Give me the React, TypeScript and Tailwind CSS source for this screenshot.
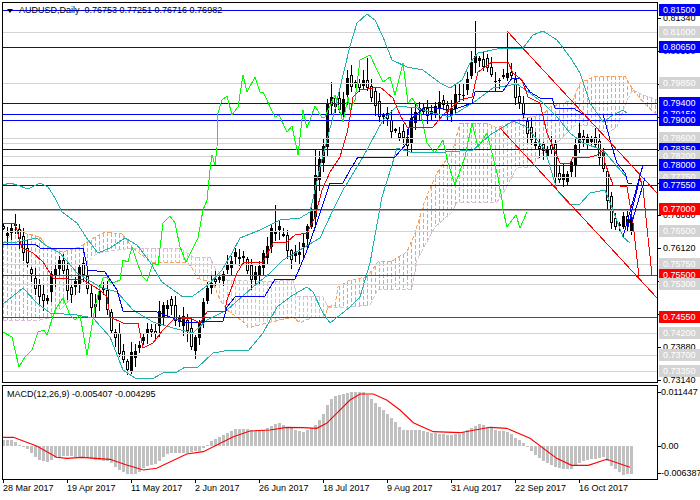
type Pt = [number, number];

const poly = (pts: Pt[]) => pts.map((p) => p.join(",")).join(" ");

const at = (pts: Pt[], x: number) => {
  for (let i = 1; i < pts.length; i++) {
    if (x <= pts[i][0]) {
      const [x0, y0] = pts[i - 1];
      const [x1, y1] = pts[i];
      return x1 === x0 ? y1 : y0 + ((y1 - y0) * (x - x0)) / (x1 - x0);
    }
  }
  return pts[pts.length - 1][1];
};

// price objects: y is the line position, colour gives the tag
const LEVELS: { y: number; price: string; color: string }[] = [
  { y: 10, price: "0.81500", color: "#0000ff" },
  { y: 32, price: "0.81000", color: "#d3d3d3" },
  { y: 47, price: "0.80650", color: "#0000ff" },
  { y: 83, price: "0.79850", color: "#d3d3d3" },
  { y: 103, price: "0.79400", color: "#0000ff" },
  { y: 114, price: "0.79150", color: "#0000ff" },
  { y: 120, price: "0.79000", color: "#0000ff" },
  { y: 138, price: "0.78600", color: "#d3d3d3" },
  { y: 149, price: "0.78350", color: "#0000ff" },
  { y: 156, price: "0.78200", color: "#d3d3d3" },
  { y: 165, price: "0.78000", color: "#0000ff" },
  { y: 177, price: "0.77750", color: "#d3d3d3" },
  { y: 185, price: "0.77550", color: "#0000ff" },
  { y: 209, price: "0.77000", color: "#ff0000" },
  { y: 231, price: "0.76500", color: "#d3d3d3" },
  { y: 264, price: "0.75750", color: "#d3d3d3" },
  { y: 275, price: "0.75500", color: "#ff0000" },
  { y: 284, price: "0.75300", color: "#d3d3d3" },
  { y: 317, price: "0.74550", color: "#ff0000" },
  { y: 333, price: "0.74200", color: "#d3d3d3" },
  { y: 355, price: "0.73700", color: "#d3d3d3" },
  { y: 371, price: "0.73350", color: "#d3d3d3" },
];

const SCALE = ["0.81340", "0.80590", "0.79850", "0.79100", "0.78360", "0.77610", "0.76860", "0.76120", "0.75370", "0.74630", "0.73880", "0.73140"];

const CLOSE: Pt[] = [
  [3, 232], [10, 230], [15, 225], [20, 240], [25, 262], [30, 270], [35, 290], [42, 298], [47, 297], [52, 273], [60, 260], [67, 287], [72, 293], [80, 265], [87, 290], [92, 313], [100, 287], [105, 293], [110, 330], [115, 337], [122, 360], [127, 367], [132, 353], [140, 340], [148, 330], [155, 330], [160, 310], [170, 300], [175, 323], [185, 317], [190, 353], [197, 330], [203, 300], [208, 283], [218, 283], [228, 267], [235, 253], [243, 260], [250, 278], [257, 270], [267, 243], [272, 227], [282, 230], [290, 257], [298, 253], [303, 240], [308, 223], [312, 210], [316, 167], [322, 157], [325, 117], [328, 103], [332, 97], [340, 113], [347, 80], [352, 83], [358, 88], [362, 80], [372, 97], [378, 113], [388, 122], [392, 130], [400, 135], [408, 150], [412, 110], [420, 108], [430, 113], [440, 100], [447, 113], [455, 97], [465, 90], [470, 67], [478, 55], [485, 67], [492, 80], [500, 80], [510, 70], [515, 100], [520, 100], [524, 123], [530, 140], [537, 147], [545, 157], [550, 140], [555, 177], [560, 180], [567, 173], [572, 163], [577, 133], [582, 143], [590, 133], [597, 150], [603, 167], [608, 205], [612, 223], [618, 228], [623, 220], [628, 228], [632, 218],
];

const SPIKES: Record<number, number> = { 475: 21, 507: 31, 275: 205, 315: 150, 331: 82, 347: 70, 367: 58, 395: 128 };

const CANDLES = Array.from({ length: 158 }, (_, i) => {
  const x = 3 + 4 * i;
  const jit = (n: number) => ((Math.sin(i * n) * 43758.5453) % 1 + 1) % 1;
  const close = at(CLOSE, x) + (jit(12.9) - 0.5) * 8;
  const open = (i ? at(CLOSE, x - 4) : close + 3) + (jit(7.3) - 0.5) * 10;
  const top = Math.min(open, close);
  const bot = Math.max(open, close);
  const spike = Object.keys(SPIKES).map(Number).find((s) => Math.abs(s - x) < 2);
  return {
    x,
    up: close < open,
    top,
    h: Math.max(bot - top, 1),
    hi: spike ? SPIKES[spike] : top - 2 - jit(3.1) * 9,
    lo: bot + 2 + jit(5.7) * 9,
  };
});

const GREEN: Pt[] = [
  [3, 332], [12, 337], [19, 367], [25, 357], [32, 350], [38, 332], [44, 330], [47, 335], [55, 310], [63, 298], [70, 315], [75, 320], [80, 315], [87, 355], [95, 307], [100, 287], [103, 278], [107, 277], [110, 282], [115, 282], [120, 280], [123, 260], [128, 262], [132, 247], [138, 265], [143, 277], [147, 281], [153, 263], [158, 265], [163, 223], [170, 216], [175, 223], [180, 247], [186, 262], [198, 238], [203, 210], [207, 200], [210, 170], [212, 155], [215, 165], [217, 147], [218, 113], [222, 100], [227, 96], [232, 115], [238, 107], [243, 75], [247, 92], [255, 77], [260, 92], [263, 92], [275, 117], [279, 115], [287, 132], [292, 126], [298, 155], [303, 110], [307, 128], [315, 106], [322, 118], [325, 117], [335, 95], [343, 122], [348, 97], [350, 110], [355, 100], [360, 60], [370, 55], [378, 72], [383, 82], [390, 77], [395, 95], [403, 63], [408, 103], [412, 98], [420, 110], [427, 143], [435, 153], [443, 140], [448, 163], [455, 185], [465, 157], [472, 123], [478, 147], [487, 133], [492, 153], [498, 177], [502, 200], [503, 210], [507, 227], [516, 215], [520, 228], [527, 212],
];

const BB_UP: Pt[] = [
  [3, 185], [10, 183], [17, 185], [28, 189], [40, 183], [48, 187], [55, 198], [62, 212], [77, 223], [88, 240], [98, 253], [110, 248], [125, 238], [137, 245], [150, 262], [162, 282], [183, 297], [193, 296], [208, 285], [222, 270], [232, 253], [240, 238], [260, 230], [280, 220], [300, 218], [310, 212], [315, 190], [320, 167], [333, 117], [350, 46], [357, 23], [367, 14], [375, 20], [383, 37], [392, 60], [407, 67], [423, 70], [440, 83], [450, 88], [462, 80], [470, 63], [478, 53], [497, 49], [523, 48], [533, 35], [543, 31], [557, 40], [570, 57], [580, 73], [590, 103], [603, 122], [613, 115], [623, 110], [627, 113],
];
const BB_MID: Pt[] = [
  [3, 243], [17, 242], [37, 238], [45, 245], [60, 253], [77, 273], [100, 287], [117, 292], [133, 310], [153, 322], [173, 328], [193, 333], [207, 320], [227, 310], [253, 287], [270, 273], [283, 260], [320, 238], [333, 210], [343, 190], [363, 157], [383, 120], [397, 106], [417, 108], [430, 112], [450, 117], [477, 100], [493, 88], [517, 84], [530, 93], [543, 103], [557, 117], [570, 133], [583, 143], [603, 150], [627, 178],
];
const BB_LOW: Pt[] = [
  [3, 304], [23, 288], [37, 303], [50, 313], [77, 315], [93, 318], [110, 337], [123, 370], [135, 378], [152, 379], [163, 373], [177, 372], [185, 367], [197, 368], [213, 353], [230, 350], [248, 351], [263, 333], [277, 307], [293, 295], [307, 287], [313, 292], [323, 313], [330, 323], [340, 315], [350, 307], [360, 297], [370, 263], [382, 197], [392, 165], [397, 148], [410, 152], [433, 153], [473, 150], [490, 135], [513, 121], [527, 127], [545, 150], [557, 190], [570, 205], [580, 204], [590, 193], [605, 190], [613, 210], [623, 237], [630, 243],
];

const TENKAN: Pt[] = [
  [3, 223], [15, 223], [22, 248], [33, 253], [43, 262], [53, 278], [83, 280], [100, 290], [107, 297], [110, 317], [123, 323], [138, 323], [143, 348], [153, 343], [163, 330], [173, 320], [190, 318], [200, 323], [207, 312], [225, 311], [227, 300], [237, 273], [243, 263], [263, 262], [273, 243], [287, 242], [295, 235], [307, 233], [315, 217], [322, 190], [330, 172], [340, 157], [347, 133], [350, 117], [353, 97], [360, 90], [380, 87], [393, 98], [400, 115], [407, 127], [433, 127], [443, 115], [460, 100], [472, 97], [478, 72], [492, 62], [508, 62], [513, 73], [522, 80], [528, 97], [540, 103], [547, 133], [560, 163], [570, 163], [573, 157], [587, 158], [597, 155], [603, 150], [605, 163], [613, 185], [627, 187], [633, 223], [639, 277],
];
const TENKAN2: Pt[] = [[639, 175], [643, 188], [647, 228], [652, 275]];

const KIJUN: Pt[] = [
  [3, 244], [35, 244], [40, 248], [83, 248], [88, 270], [105, 272], [117, 290], [123, 311], [157, 312], [173, 318], [185, 323], [203, 322], [223, 321], [227, 307], [235, 297], [265, 296], [275, 279], [295, 279], [308, 248], [320, 213], [330, 183], [343, 183], [350, 170], [358, 157], [395, 157], [407, 143], [410, 120], [425, 107], [453, 110], [472, 103], [475, 92], [503, 91], [512, 78], [520, 78], [530, 92], [540, 98], [552, 98], [555, 108], [573, 108], [583, 114], [603, 114], [612, 147], [617, 163], [625, 173], [628, 183], [632, 183],
];

const TEAL = "#20b2aa";
const ORANGE = "#f4a460";
const THISTLE = "#d8bfd8";

const CLOUDS: { fill: string; topColor: string; botColor: string; top: Pt[]; bot: Pt[] }[] = [
  {
    fill: ORANGE, topColor: ORANGE, botColor: THISTLE,
    top: [[3, 244], [17, 227], [25, 233], [40, 237], [47, 247], [63, 252], [80, 247], [95, 237], [105, 232], [122, 234], [133, 248]],
    bot: [[3, 320], [40, 320], [53, 317], [67, 303], [80, 290], [83, 273], [88, 262], [95, 255], [103, 252], [133, 248]],
  },
  {
    fill: THISTLE, topColor: THISTLE, botColor: ORANGE,
    top: [[133, 248], [180, 248], [193, 257], [210, 257], [215, 268], [227, 280], [267, 282], [293, 280], [297, 296], [323, 297], [328, 307]],
    bot: [[133, 248], [150, 262], [187, 262], [192, 268], [197, 278], [213, 283], [220, 300], [227, 310], [245, 323], [248, 328], [267, 323], [293, 317], [300, 323], [313, 317], [325, 317], [328, 307]],
  },
  {
    fill: ORANGE, topColor: ORANGE, botColor: THISTLE,
    top: [[328, 307], [335, 305], [338, 287], [350, 280], [367, 277], [378, 262], [392, 261], [407, 252], [415, 233], [425, 200], [437, 173], [453, 150], [460, 123], [487, 123], [497, 128], [523, 118], [543, 115], [550, 107], [573, 100], [580, 83], [593, 77], [625, 76], [633, 90]],
    bot: [[328, 307], [350, 307], [370, 305], [378, 289], [412, 289], [417, 260], [435, 227], [452, 212], [457, 202], [497, 202], [505, 190], [517, 167], [530, 168], [545, 150], [560, 140], [575, 125], [590, 125], [607, 133], [617, 127], [627, 100], [633, 90]],
  },
  {
    fill: ORANGE, topColor: THISTLE, botColor: ORANGE,
    top: [[633, 90], [643, 95], [657, 100]],
    bot: [[633, 90], [645, 104], [657, 115]],
  },
];

const HIST_A: Pt[] = [
  [10, 180], [35, 180], [50, 190], [70, 200], [90, 215], [105, 232], [120, 242], [140, 245], [155, 240], [170, 230], [200, 228], [245, 232], [290, 240], [330, 245], [345, 262], [380, 282], [410, 282], [430, 262], [470, 250], [490, 230], [510, 218], [560, 218], [600, 212], [620, 195], [640, 178], [680, 158], [710, 145], [745, 148], [775, 155], [810, 140], [830, 128], [850, 135], [880, 148], [910, 155], [940, 140], [965, 112], [985, 65], [1000, 50], [1050, 35],
];
const HIST_B: Pt[] = [
  [0, 35], [40, 35], [60, 55], [80, 75], [110, 100], [135, 125], [155, 150], [200, 150], [255, 160], [300, 165], [330, 160], [360, 145], [385, 132], [410, 140], [440, 152], [475, 155], [490, 170], [510, 180], [525, 195], [535, 207], [570, 238], [620, 262], [660, 270], [680, 250], [720, 238], [760, 232], [790, 265], [820, 285], [850, 280],
];
const HIST: Pt[] = [
  ...HIST_A.map(([x, y]): Pt => [x / 3, 380 + y / 3]),
  ...HIST_B.map(([x, y]): Pt => [350 + x / 3, 380 + y / 3]),
];
const SIGNAL: Pt[] = [
  ...([[8, 172], [40, 172], [110, 198], [170, 232], [200, 235], [245, 232], [330, 238], [380, 255], [430, 270], [470, 265], [560, 222], [610, 215], [700, 170], [750, 153], [810, 150], [860, 142], [910, 143], [950, 145], [980, 130], [1050, 60]] as Pt[]).map(([x, y]): Pt => [x / 3, 380 + y / 3]),
  ...([[0, 60], [30, 42], [70, 42], [110, 60], [150, 90], [190, 128], [250, 155], [330, 158], [420, 142], [470, 145], [540, 175], [620, 235], [665, 256], [715, 256], [770, 238], [840, 262]] as Pt[]).map(([x, y]): Pt => [350 + x / 3, 380 + y / 3]),
];

const DATES = ["28 Mar 2017", "19 Apr 2017", "11 May 2017", "2 Jun 2017", "26 Jun 2017", "18 Jul 2017", "9 Aug 2017", "31 Aug 2017", "22 Sep 2017", "16 Oct 2017"];

function MainChart() {
  return (
    <svg width={654} height={379} viewBox="3 3 654 379" className="block">
      {CLOUDS.map((c, n) => {
        const xs: number[] = [];
        for (let x = 3; x <= 655; x += 4) if (x >= c.top[0][0] && x <= c.top[c.top.length - 1][0]) xs.push(x);
        return (
          <g key={n} fill="none" shapeRendering="crispEdges">
            {xs.map((x) => (
              <line key={x} x1={x + 0.5} x2={x + 0.5} y1={at(c.top, x)} y2={at(c.bot, x)} stroke={c.fill} strokeDasharray="4 2" />
            ))}
            <polyline points={poly(c.top)} stroke={c.topColor} strokeDasharray="4 2" />
            <polyline points={poly(c.bot)} stroke={c.botColor} strokeDasharray="4 2" />
          </g>
        );
      })}

      <g shapeRendering="crispEdges">
        {CANDLES.map((c) => (
          <g key={c.x}>
            <line x1={c.x + 0.5} x2={c.x + 0.5} y1={c.hi} y2={c.lo} stroke="#000" />
            {c.up ? (
              <rect x={c.x - 1} y={c.top} width={3} height={c.h} fill="#000" />
            ) : (
              <rect x={c.x - 0.5} y={c.top} width={2} height={c.h} fill="#fff" stroke="#000" />
            )}
          </g>
        ))}
      </g>

      <g shapeRendering="crispEdges">
        <line x1={3} x2={657} y1={143.5} y2={143.5} stroke="#d3d3d3" />
        <line x1={3} x2={657} y1={210.5} y2={210.5} stroke="#a9a9a9" />
        {LEVELS.map((l) => (
          <line key={l.price} x1={3} x2={657} y1={l.y + 0.5} y2={l.y + 0.5} stroke={l.color} />
        ))}
      </g>

      <g fill="none" shapeRendering="crispEdges">
        <polyline points={poly(GREEN)} stroke="#00ff00" />
        <polyline points={poly(BB_UP)} stroke={TEAL} />
        <polyline points={poly(BB_MID)} stroke={TEAL} />
        <polyline points={poly(BB_LOW)} stroke={TEAL} />
        <polyline points={poly(KIJUN)} stroke="#0000ff" />
        <polyline points={poly(TENKAN)} stroke="#ff0000" />
        <polyline points={poly(TENKAN2)} stroke="#ff0000" />
        {/* trend channel */}
        <line x1={507} y1={31} x2={657} y2={193} stroke="#ff0000" />
        <line x1={500} y1={128} x2={657} y2={298} stroke="#ff0000" />
        {/* forecast wedge */}
        <polyline points="623,237 643,165" stroke="#0000ff" />
        <polyline points="628,227 640,177" stroke="#0000ff" />
        <polyline points="632,222 645,178" stroke="#0000ff" />
      </g>
    </svg>
  );
}

function MacdChart() {
  const bars = Array.from({ length: 158 }, (_, i) => 3 + 4 * i);
  return (
    <svg width={654} height={93} viewBox="3 386 654 93" className="block">
      <g shapeRendering="crispEdges">
        {bars.map((x) => {
          const y = at(HIST, x);
          return <rect key={x} x={x - 1} y={Math.min(y, 446)} width={3} height={Math.abs(446 - y)} fill="#c0c0c0" />;
        })}
      </g>
      <polyline points={poly(SIGNAL)} fill="none" stroke="#ff0000" strokeWidth={1.1} />
    </svg>
  );
}

function AxisText({ y, text, left = "left-[5px]" }: { y: number; text: string; left?: string }) {
  return (
    <>
      <div className="absolute left-0 w-[3px] h-px bg-black" style={{ top: y }} />
      <div className={`absolute ${left} leading-[12px] text-black`} style={{ top: y - 6 }}>
        {text}
      </div>
    </>
  );
}

export default function App() {
  return (
    <div className="w-[700px] h-[500px] bg-white flex flex-col pt-[2px] text-[9px] text-black font-['Liberation_Sans',Arial,sans-serif] overflow-hidden">
      <div className="flex h-[381px] shrink-0">
        <div className="ml-[2px] w-[656px] border border-black relative">
          <MainChart />
          <div className="absolute left-[4px] top-[6px] w-0 h-0 border-x-[3px] border-x-transparent border-t-[4px] border-t-black" />
          <div className="absolute left-[16px] top-[1px] leading-[12px] whitespace-nowrap">
            AUDUSD,Daily&nbsp;&nbsp;0.76753 0.77251 0.76716 0.76982
          </div>
        </div>
        <div className="relative flex-1">
          {SCALE.map((s, i) => (
            <AxisText key={s} y={16 + 32.9 * i} text={s} />
          ))}
          {LEVELS.map((l) => (
            <div
              key={l.price}
              className="absolute left-[1px] right-0 h-[12px] leading-[12px] pl-[4px] text-white"
              style={{ top: l.y - 8, background: l.color }}
            >
              {l.price}
            </div>
          ))}
        </div>
      </div>

      <div className="flex h-[95px] mt-[2px] shrink-0">
        <div className="ml-[2px] w-[656px] border border-black relative">
          <MacdChart />
          <div className="absolute left-[4px] top-[2px] leading-[12px] whitespace-nowrap">MACD(12,26,9) -0.005407 -0.004295</div>
        </div>
        <div className="relative flex-1">
          <AxisText y={7} text="0.011447" left="left-[3px]" />
          <AxisText y={61} text="0.00" left="left-[3px]" />
          <AxisText y={88} text="-0.006387" left="left-[3px]" />
        </div>
      </div>

      <div className="flex ml-[3px]">
        {DATES.map((d) => (
          <div key={d} className="w-[64px] shrink-0">
            <div className="w-px h-[3px] bg-black" />
            <div className="leading-[12px] -mt-[1px]">{d}</div>
          </div>
        ))}
      </div>
    </div>
  );
}
